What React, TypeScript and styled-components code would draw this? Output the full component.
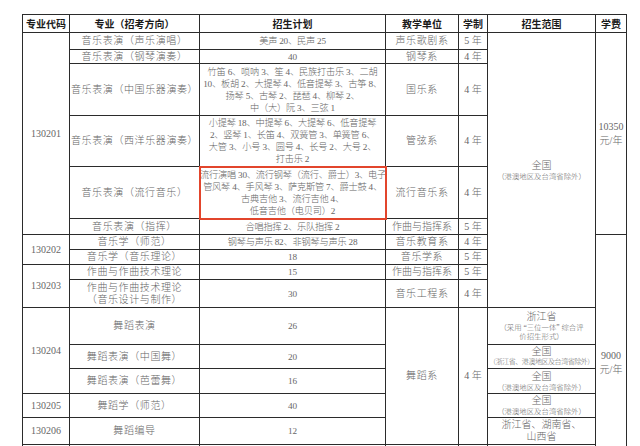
import React from 'react';
import styled, { createGlobalStyle, css } from 'styled-components';

const GlobalStyle = createGlobalStyle`
  html, body {
    margin: 0;
    padding: 0;
    background: #ffffff;
    overflow: hidden;
  }
`;

const Page = styled.div`
  padding: 14px 0 0 22px;
  width: 640px;
  height: 446px;
  box-sizing: border-box;
  overflow: hidden;
`;

const Grid = styled.table`
  border-collapse: collapse;
  table-layout: fixed;
  width: 604px;
  font-family: 'Liberation Serif', 'Noto Sans CJK SC', serif;
  font-size: 10px;
  font-weight: 300;
  line-height: 12px;
  color: #666;
`;

const Row = styled.tr<{ $h: number }>`
  height: ${(p) => p.$h}px;
`;

const Head = styled.th`
  border: 1.5px solid #2b2b2b;
  padding: 0;
  font-family: 'Noto Sans CJK SC', sans-serif;
  font-weight: 700;
  font-size: 10px;
  color: #1a1a1a;
  text-align: center;
  vertical-align: middle;
  white-space: nowrap;
`;

const Cell = styled.td<{ $mark?: boolean; $spaced?: boolean }>`
  border: 1.5px solid #2b2b2b;
  padding: 0 1px;
  text-align: center;
  vertical-align: middle;
  white-space: nowrap;
  overflow: hidden;
  letter-spacing: ${(p) => (p.$spaced ? '0.6px' : '0')};
  ${(p) =>
    p.$mark &&
    css`
      outline: 2px solid #e2452c;
      outline-offset: -1px;
      position: relative;
      z-index: 1;
    `}
`;

const Plan = styled(Cell)`
  font-size: 9.2px;
  letter-spacing: -0.2px;
  line-height: 12px;
  padding: 0;
`;

const Region = styled.div`
  font-size: 10px;
  line-height: 12px;
`;

const Note = styled.div<{ $tight?: boolean }>`
  font-size: ${(p) => (p.$tight ? '7px' : '7.4px')};
  line-height: 9px;
  letter-spacing: ${(p) => (p.$tight ? '-0.45px' : '0')};
  white-space: nowrap;
`;

const Fee = styled.div`
  font-size: 10px;
  line-height: 14px;
`;

const App = () => {
  return (
    <Page>
      <GlobalStyle />
      <Grid>
        <colgroup>
          <col style={{ width: 47 }} />
          <col style={{ width: 130 }} />
          <col style={{ width: 186 }} />
          <col style={{ width: 73 }} />
          <col style={{ width: 29 }} />
          <col style={{ width: 108 }} />
          <col style={{ width: 31 }} />
        </colgroup>
        <thead>
          <Row $h={18}>
            <Head>专业代码</Head>
            <Head>专业（招考方向）</Head>
            <Head>招生计划</Head>
            <Head>教学单位</Head>
            <Head>学制</Head>
            <Head>招生范围</Head>
            <Head>学费</Head>
          </Row>
        </thead>
        <tbody>
          <Row $h={17}>
            <Cell rowSpan={6}>130201</Cell>
            <Cell $spaced>音乐表演（声乐演唱）</Cell>
            <Plan>美声 20、民声 25</Plan>
            <Cell $spaced>声乐歌剧系</Cell>
            <Cell>5 年</Cell>
            <Cell rowSpan={10}>
              <Region>全国</Region>
              <Note>（港澳地区及台湾省除外）</Note>
            </Cell>
            <Cell rowSpan={6}>
              <Fee>
                10350
                <br />
                元/年
              </Fee>
            </Cell>
          </Row>
          <Row $h={14}>
            <Cell $spaced>音乐表演（钢琴演奏）</Cell>
            <Plan>40</Plan>
            <Cell $spaced>钢琴系</Cell>
            <Cell>4 年</Cell>
          </Row>
          <Row $h={52}>
            <Cell $spaced>音乐表演（中国乐器演奏）</Cell>
            <Plan>
              竹笛 6、唢呐 3、笙 4、民族打击乐 3、二胡
              <br />
              10、板胡 2、大提琴 4、低音提琴 3、古筝 8、
              <br />
              扬琴 5、古琴 2、琵琶 4、柳琴 2、
              <br />
              中（大）阮 3、三弦 1
            </Plan>
            <Cell $spaced>国乐系</Cell>
            <Cell>4 年</Cell>
          </Row>
          <Row $h={51}>
            <Cell $spaced>音乐表演（西洋乐器演奏）</Cell>
            <Plan>
              小提琴 18、中提琴 6、大提琴 6、低音提琴
              <br />
              2、竖琴 1、长笛 4、双簧管 3、单簧管 6、
              <br />
              大管 3、小号 3、圆号 4、长号 2、大号 2、
              <br />
              打击乐 2
            </Plan>
            <Cell $spaced>管弦系</Cell>
            <Cell>4 年</Cell>
          </Row>
          <Row $h={52}>
            <Cell $spaced>音乐表演（流行音乐）</Cell>
            <Plan $mark>
              流行演唱 30、流行钢琴（流行、爵士）3、电子
              <br />
              管风琴 4、手风琴 3、萨克斯管 7、爵士鼓 4、
              <br />
              古典吉他 3、流行吉他 4、
              <br />
              低音吉他（电贝司）2
            </Plan>
            <Cell $spaced>流行音乐系</Cell>
            <Cell>4 年</Cell>
          </Row>
          <Row $h={16}>
            <Cell $spaced>音乐表演（指挥）</Cell>
            <Plan>合唱指挥 2、乐队指挥 2</Plan>
            <Cell>作曲与指挥系</Cell>
            <Cell>5 年</Cell>
          </Row>
          <Row $h={15}>
            <Cell rowSpan={2}>130202</Cell>
            <Cell $spaced>音乐学（师范）</Cell>
            <Plan>钢琴与声乐 82、非钢琴与声乐 28</Plan>
            <Cell $spaced>音乐教育系</Cell>
            <Cell>4 年</Cell>
            <Cell rowSpan={10}>
              <Fee>
                9000
                <br />
                元/年
              </Fee>
            </Cell>
          </Row>
          <Row $h={15}>
            <Cell $spaced>音乐学（音乐理论）</Cell>
            <Plan>18</Plan>
            <Cell $spaced>音乐学系</Cell>
            <Cell>5 年</Cell>
          </Row>
          <Row $h={15}>
            <Cell rowSpan={2}>130203</Cell>
            <Cell $spaced>作曲与作曲技术理论</Cell>
            <Plan>15</Plan>
            <Cell>作曲与指挥系</Cell>
            <Cell>5 年</Cell>
          </Row>
          <Row $h={28}>
            <Cell $spaced>
              作曲与作曲技术理论
              <br />
              （音乐设计与制作）
            </Cell>
            <Plan>30</Plan>
            <Cell $spaced>音乐工程系</Cell>
            <Cell>4 年</Cell>
          </Row>
          <Row $h={37}>
            <Cell rowSpan={3}>130204</Cell>
            <Cell $spaced>舞蹈表演</Cell>
            <Plan>26</Plan>
            <Cell rowSpan={5} $spaced>
              舞蹈系
            </Cell>
            <Cell rowSpan={5}>4 年</Cell>
            <Cell>
              <Region>浙江省</Region>
              <Note>（采用 “三位一体” 综合评</Note>
              <Note>价招生形式）</Note>
            </Cell>
          </Row>
          <Row $h={24}>
            <Cell $spaced>舞蹈表演（中国舞）</Cell>
            <Plan>20</Plan>
            <Cell>
              <Region>全国</Region>
              <Note $tight>（浙江省、港澳地区及台湾省除外）</Note>
            </Cell>
          </Row>
          <Row $h={25}>
            <Cell $spaced>舞蹈表演（芭蕾舞）</Cell>
            <Plan>16</Plan>
            <Cell>
              <Region>全国</Region>
              <Note>（港澳地区及台湾省除外）</Note>
            </Cell>
          </Row>
          <Row $h={24}>
            <Cell>130205</Cell>
            <Cell $spaced>舞蹈学（师范）</Cell>
            <Plan>40</Plan>
            <Cell>
              <Region>全国</Region>
              <Note>（港澳地区及台湾省除外）</Note>
            </Cell>
          </Row>
          <Row $h={27}>
            <Cell>130206</Cell>
            <Cell $spaced>舞蹈编导</Cell>
            <Plan>12</Plan>
            <Cell>
              <Region>浙江省、湖南省、</Region>
              <Region>山西省</Region>
            </Cell>
          </Row>
          <Row $h={46}>
            <Cell></Cell>
            <Cell></Cell>
            <Plan></Plan>
            <Cell></Cell>
            <Cell></Cell>
            <Cell></Cell>
          </Row>
        </tbody>
      </Grid>
    </Page>
  );
};

export default App;
